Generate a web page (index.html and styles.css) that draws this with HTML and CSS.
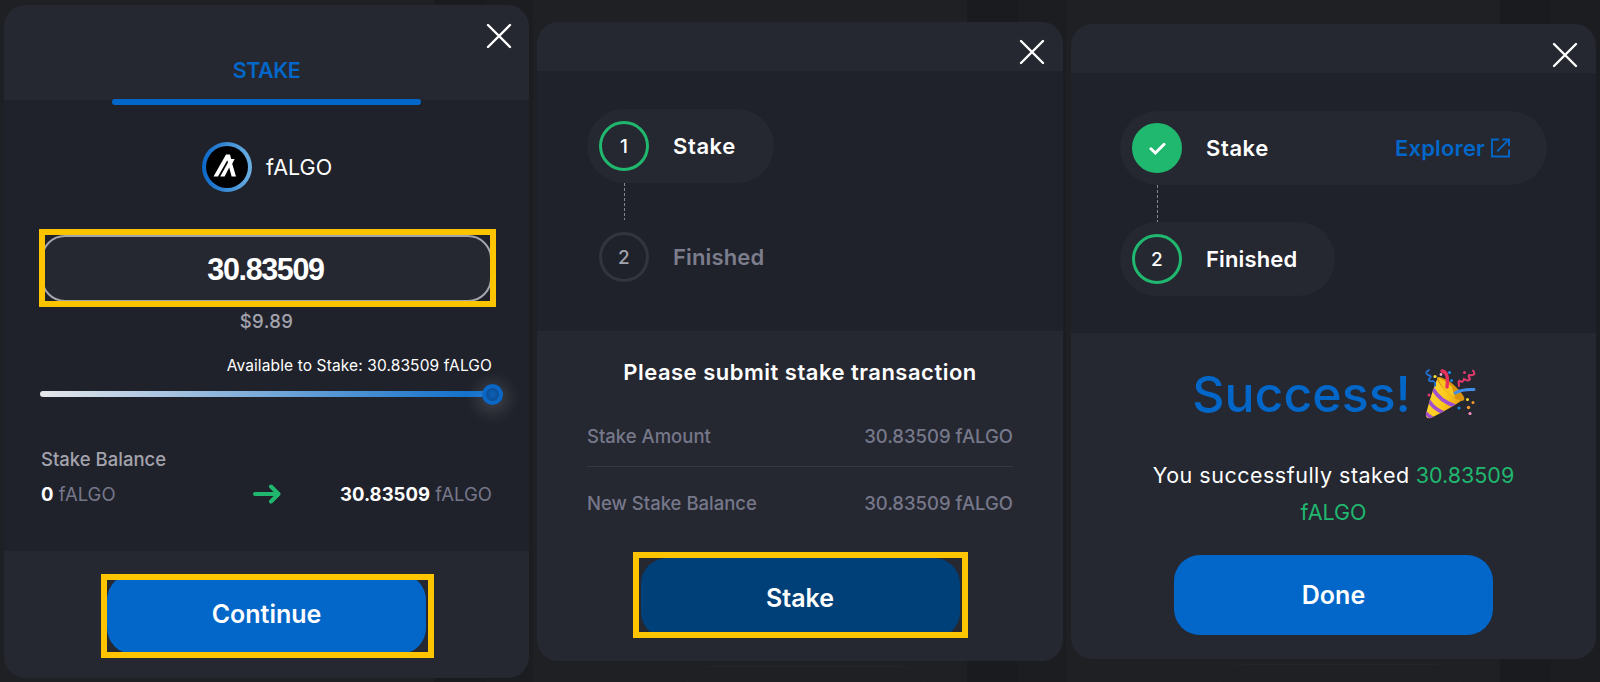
FILE: index.html
```html
<!DOCTYPE html>
<html lang="en">

<head>
    <meta charset="UTF-8">
    <meta name="viewport" content="width=device-width, initial-scale=1.0">
    <title>Stake fALGO</title>
    <link rel="stylesheet" href="styles.css">
</head>

<body>
    <div class="screens">
        <!-- amount -->
        <div class="screen screen-amount">
            <div class="modal">
                <div class="modal-head tabs">
                    <svg class="close" viewBox="0 0 26 26"><path d="M2 2L24 24M24 2L2 24"/></svg>
                    <div class="tab">STAKE</div>
                </div>
                <div class="modal-body">
                    <div class="tab-bar"></div>
                    <div class="token">
                        <svg class="token-logo" viewBox="0 0 50 50">
                            <defs>
                                <linearGradient id="ring" x1="0" y1="0" x2="1" y2="0">
                                    <stop offset="0" stop-color="#0a67c9"/>
                                    <stop offset="1" stop-color="#6db1e2"/>
                                </linearGradient>
                            </defs>
                            <circle cx="25" cy="25" r="25" fill="url(#ring)"/>
                            <circle cx="25" cy="25" r="21" fill="#000"/>
                            <path d="M11.5 34.5L24 12.5H28L29.2 17H32.6L30.2 21.8L34 34.5H29.6L27.2 25.6L22.6 34.5H18.2L26 20.5L25.3 18.2L16 34.5Z" fill="#fff"/>
                        </svg>
                        <span class="token-name">fALGO</span>
                    </div>
                    <div class="mark mark-input">
                        <div class="amount">30.83509</div>
                    </div>
                    <div class="usd">$9.89</div>
                    <div class="available">Available to Stake: 30.83509 fALGO</div>
                    <div class="slider"><span class="thumb"></span></div>
                    <div class="balance-title">Stake Balance</div>
                    <div class="balance">
                        <span><b>0</b> fALGO</span>
                        <svg class="arrow" viewBox="0 0 28 20"><path d="M2 10H25M18 2.5L25.5 10L18 17.5"/></svg>
                        <span class="balance-new"><b>30.83509</b> fALGO</span>
                    </div>
                </div>
                <div class="modal-foot">
                    <div class="mark mark-continue">
                        <div class="btn">Continue</div>
                    </div>
                </div>
            </div>
        </div>

        <!-- submit -->
        <div class="screen screen-submit">
            <div class="modal">
                <div class="modal-head">
                    <svg class="close" viewBox="0 0 26 26"><path d="M2 2L24 24M24 2L2 24"/></svg>
                </div>
                <div class="modal-body steps">
                    <div class="step active">
                        <span class="num">1</span>
                        <span class="label label-stake">Stake</span>
                    </div>
                    <div class="line"></div>
                    <div class="step">
                        <span class="num">2</span>
                        <span class="label">Finished</span>
                    </div>
                </div>
                <div class="modal-foot">
                    <div class="foot-title">Please submit stake transaction</div>
                    <div class="row"><span>Stake Amount</span><span>30.83509 fALGO</span></div>
                    <div class="row"><span>New Stake Balance</span><span>30.83509 fALGO</span></div>
                    <div class="mark mark-stake">
                        <div class="btn btn-dark">Stake</div>
                    </div>
                </div>
            </div>
            <div class="ghost"></div>
        </div>

        <!-- success -->
        <div class="screen screen-success">
            <div class="modal">
                <div class="modal-head">
                    <svg class="close" viewBox="0 0 26 26"><path d="M2 2L24 24M24 2L2 24"/></svg>
                </div>
                <div class="modal-body steps">
                    <div class="step active wide">
                        <span class="num done"><svg viewBox="0 0 16 12"><path d="M1.8 6.2L6 10.2L14.2 2"/></svg></span>
                        <span class="label label-stake">Stake</span>
                        <span class="explorer">Explorer</span>
                        <svg class="external" viewBox="0 0 20 20"><path d="M8.5 1H1V19H19V11.5M12 1H19V8M19 1L6.5 13.5"/></svg>
                    </div>
                    <div class="line"></div>
                    <div class="step active">
                        <span class="num">2</span>
                        <span class="label">Finished</span>
                    </div>
                </div>
                <div class="modal-foot">
                    <div class="success">
                        <span>Success!</span>
                        <svg class="party" viewBox="0 0 50 50">
                            <defs>
                                <linearGradient id="cone" x1="0" y1="0.3" x2="1" y2="0.7">
                                    <stop offset="0" stop-color="#ffd83a"/>
                                    <stop offset="0.5" stop-color="#fbc91c"/>
                                    <stop offset="1" stop-color="#e79a10"/>
                                </linearGradient>
                                <clipPath id="coneClip"><path d="M13 8L39 30Q26 39 6 49Q0 50 1 45Q6 25 13 8Z"/></clipPath>
                            </defs>
                            <path d="M13 8L39 30Q26 39 6 49Q0 50 1 45Q6 25 13 8Z" fill="url(#cone)"/>
                            <g clip-path="url(#coneClip)" fill="none" stroke="#a04fd0" stroke-width="3.6">
                                <path d="M8 20Q15 32 30 37"/>
                                <path d="M4 32Q9 40 19 44"/>
                                <path d="M0 43Q3 47 9 50"/>
                            </g>
                            <path d="M12.5 8C18 7 28 14 34 21C38 26 41 30 38.5 31.5C34 33 25 27 19 20C14 15 11 10 12.5 8Z" fill="#d9930d"/>
                            <path d="M13 8.5C17 10 22 13 27 18L30 29C24 26 15 17 13 8.5Z" fill="#f7c51d"/>
                            <g fill="none" stroke-linecap="round">
                                <path d="M17 2Q24 3 22 18" stroke="#e8305f" stroke-width="3.4"/>
                                <path d="M30 24Q37 20 49 20.5" stroke="#3f8fe8" stroke-width="3"/>
                                <path d="M4 1Q-1 4 3 6Q8 7 4 10Q3 13 8 12Q11 13 10 17" stroke="#2273d8" stroke-width="1.8"/>
                                <path d="M48 1.5Q52 7 44 6Q43 8 45 10Q44 13 39 10Q38 14 35 12Q33 11 34 17" stroke="#e5396e" stroke-width="2"/>
                            </g>
                            <circle cx="16" cy="5.5" r="1.4" fill="#f5a0d0"/>
                            <circle cx="24.5" cy="3.5" r="1.6" fill="#178be8"/>
                            <circle cx="10" cy="7.5" r="1.6" fill="#ffe034"/>
                            <circle cx="26.5" cy="11.5" r="1.5" fill="#178be8"/>
                            <circle cx="39.5" cy="3.5" r="1.5" fill="#e5396e"/>
                            <circle cx="4" cy="26" r="1.5" fill="#e5396e"/>
                            <circle cx="42.5" cy="30.5" r="1.5" fill="#ffe034"/>
                            <circle cx="48" cy="33.5" r="1.5" fill="#f29a2e"/>
                            <circle cx="43.5" cy="38.5" r="1.7" fill="#f29a2e"/>
                            <circle cx="34" cy="39" r="1.5" fill="#178be8"/>
                            <circle cx="45" cy="44.5" r="1.6" fill="#f58fbc"/>
                        </svg>
                    </div>
                    <div class="message"><span class="message-text">You successfully staked</span> <em>30.83509</em><br><em>fALGO</em></div>
                    <div class="btn">Done</div>
                </div>
            </div>
            <div class="ghost"></div>
        </div>
    </div>
</body>

</html>
```

FILE: styles.css
```css
* {
    margin: 0;
    padding: 0;
    box-sizing: border-box;
}
body {
    background-color: #1c1d20;
    font-family: Inter, "Liberation Sans", sans-serif;
    color: #fff;
    overflow: hidden;
}
.screens {
    display: flex;
    width: 1600px;
    height: 682px;
}
.screen {
    width: 533px;
    height: 682px;
    overflow: hidden;
    background: linear-gradient(90deg, #1f2023 434px, #1a1b1e 434px, #1a1b1e 485px, #1c1d20 485px);
}
.screen-amount {
    padding: 5px 0 0 4px;
}
.screen-submit {
    padding: 22px 0 0 4px;
}
.screen-success {
    width: 534px;
    padding: 24px 0 0 5px;
}
.modal {
    display: flex;
    flex-direction: column;
    width: 525px;
    border-radius: 21px;
    overflow: hidden;
    background-color: #252731;
}
.screen-amount .modal {
    height: 673px;
}
.screen-submit .modal {
    width: 526px;
    height: 639px;
}
.screen-success .modal {
    height: 635px;
}
.modal-head {
    height: 49px;
    padding: 17px 18px 0 0;
}
.modal-body {
    background-color: #20222b;
}
.modal-foot {
    flex: 1;
    display: flex;
    flex-direction: column;
    align-items: center;
}
.close {
    display: block;
    width: 26px;
    height: 26px;
    margin-left: auto;
    fill: none;
    stroke: #fff;
    stroke-width: 2.4;
    stroke-linecap: round;
}
.screen-success .modal-head {
    padding-top: 18px;
}

/* faint button of the page behind */
.ghost {
    width: 245px;
    height: 60px;
    margin: 5px 0 0 146px;
    border: 1px solid #242529;
    border-radius: 28px;
}

/* amount */
.tabs {
    height: 94px;
    padding: 18px 17px 0 0;
}
.tab {
    width: 309px;
    margin: 6px auto 0 108px;
    text-align: center;
    font-size: 21.5px;
    line-height: 30px;
    font-weight: 600;
    letter-spacing: -0.5px;
    color: #0267c8;
}
.tab-bar {
    width: 309px;
    height: 6px;
    margin-left: 71px;
    border-radius: 3px;
    background-color: #0267c8;
}
.screen-amount .modal-body {
    height: 452px;
    padding: 0 37px;
    background: linear-gradient(#252731 1px, #20222b 1px);
}
.token {
    display: flex;
    align-items: center;
    gap: 14px;
    margin-top: 37px;
    padding-left: 161px;
}
.token-logo {
    width: 50px;
    height: 50px;
}
.token-name {
    font-size: 21.5px;
    line-height: 30px;
}
.mark {
    position: relative;
}
/* yellow frame over the marked control */
.mark::after {
    content: "";
    position: absolute;
    border: 6px solid #ffc400;
}
.mark-input {
    margin-top: 43px;
}
.mark-input::after {
    inset: -6px -4px -5px -2px;
}
.amount {
    height: 67px;
    padding-right: 2px;
    border: 2px solid #a5a5ae;
    border-radius: 24px;
    background-color: #252731;
    text-align: center;
    font: bold 30.5px/64px "Liberation Sans", sans-serif;
    letter-spacing: -1.35px;
}
.usd {
    margin-top: 7px;
    text-align: center;
    font-size: 18.5px;
    line-height: 24px;
    font-weight: 500;
    letter-spacing: 0.4px;
    color: #a3a3ad;
}
.available {
    margin-top: 22px;
    text-align: right;
    font-size: 15.5px;
    line-height: 22px;
    letter-spacing: 0.12px;
}
.slider {
    display: flex;
    align-items: center;
    justify-content: flex-end;
    width: 463px;
    height: 6px;
    margin: 14px 0 0 -1px;
    border-radius: 4px;
    background: linear-gradient(90deg, #e6e7ea, #0267c8);
}
.thumb {
    width: 21px;
    height: 21px;
    flex: none;
    border: 4px solid #0b66c4;
    border-radius: 50%;
    background: radial-gradient(#0d61b8, #0b4688);
    box-shadow: 0 3px 16px 5px rgba(255, 255, 255, 0.14);
}
.balance-title {
    margin-top: 50px;
    font-size: 18.5px;
    line-height: 24px;
    font-weight: 500;
    color: #a3a3ad;
}
.balance {
    display: flex;
    align-items: center;
    margin-top: 11px;
    font-size: 18.5px;
    line-height: 24px;
    color: #76788a;
}
.balance b {
    color: #fff;
}
.arrow {
    width: 28px;
    height: 20px;
    margin-left: 137px;
    fill: none;
    stroke: #20b86e;
    stroke-width: 4;
    stroke-linecap: round;
    stroke-linejoin: round;
}
.balance-new {
    margin-left: auto;
}
.btn {
    width: 319px;
    height: 80px;
    border-radius: 26px;
    background-color: #0267c8;
    text-align: center;
    font-size: 25px;
    line-height: 80px;
    font-weight: 600;
}
.btn-dark {
    background-color: #004078;
}
.mark-continue {
    margin-top: 23px;
}
.mark-continue::after {
    inset: 0 -8px -4px -6px;
}

/* steps */
.steps {
    padding: 38px 49px 0 50px;
    height: 260px;
}
.step {
    display: flex;
    align-items: center;
    width: max-content;
    height: 74px;
    padding: 0 38px 0 12px;
    border-radius: 37px;
    font-size: 22px;
    font-weight: 600;
    letter-spacing: 0.15px;
    color: #7c7d8c;
}
.step.active {
    background-color: #252731;
    color: #fff;
}
.step.wide {
    width: auto;
    padding-right: 37px;
}
.label-stake {
    letter-spacing: 0.6px;
}
.num {
    display: flex;
    align-items: center;
    justify-content: center;
    width: 50px;
    height: 50px;
    margin-right: 24px;
    border: 3px solid #32343e;
    border-radius: 50%;
    font-size: 19px;
    font-weight: 500;
    color: #a3a3ad;
}
.active .num {
    border-color: #20b86e;
    color: #fff;
}
.num.done {
    background-color: #20b86e;
}
.done svg {
    width: 17px;
    height: 13px;
    fill: none;
    stroke: #fff;
    stroke-width: 2.8;
    stroke-linecap: round;
}
.line {
    width: 1px;
    height: 37px;
    margin-left: 37px;
    background: repeating-linear-gradient(#85868f 0 3px, transparent 3px 5px);
}
.explorer {
    margin-left: auto;
    color: #0267c8;
}
.external {
    width: 19px;
    height: 20px;
    margin-left: 6px;
    fill: none;
    stroke: #0267c8;
    stroke-width: 2;
}
.screen-success .steps {
    padding-left: 49px;
}
.screen-submit .steps {
    height: 260px;
}

/* submit */
.foot-title {
    margin-top: 26px;
    font-size: 22px;
    line-height: 30px;
    font-weight: 600;
    letter-spacing: 0.5px;
}
.row {
    display: flex;
    justify-content: space-between;
    width: 426px;
    font-size: 18.5px;
    line-height: 24px;
    font-weight: 500;
    color: #76788a;
}
.foot-title + .row {
    height: 43px;
    margin-top: 37px;
    border-bottom: 1px solid #363842;
}
.row + .row {
    margin-top: 24px;
}
.mark-stake {
    margin-top: 43px;
}
.mark-stake::after {
    inset: -6px -8px 0 -8px;
}

/* success */
.success {
    display: flex;
    align-items: center;
    gap: 14px;
    height: 60px;
    margin-top: 31px;
    font-size: 50px;
    font-weight: 500;
    color: #0267c8;
}
.party {
    width: 50px;
    height: 50px;
    overflow: visible;
}
.message {
    margin-top: 33px;
    margin-bottom: 24px;
    text-align: center;
    font-size: 21.5px;
    line-height: 37px;
    white-space: nowrap;
}
.message-text {
    letter-spacing: 0.5px;
}
.message em {
    font-style: normal;
    color: #20b86e;
}
```
